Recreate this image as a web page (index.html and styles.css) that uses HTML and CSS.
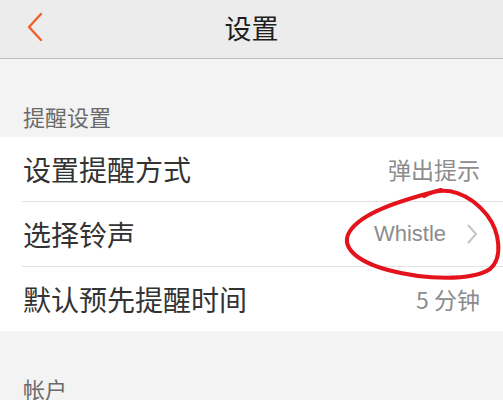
FILE: index.html
```html
<!DOCTYPE html>
<html lang="zh">
<head>
  <meta charset="UTF-8">
  <title>设置</title>
  <link rel="stylesheet" href="styles.css">
</head>
<body>
  <div class="topbar">
    <svg class="back" width="20" height="32" viewBox="0 0 20 32">
      <polyline points="15,3 3,16 15,29" fill="none" stroke="#ef6128" stroke-width="2.4" stroke-linecap="round" stroke-linejoin="round"/>
    </svg>
    <div class="title">设置</div>
  </div>

  <div class="section-title">提醒设置</div>
  <div class="group">
    <div class="row">
      <span class="label">设置提醒方式</span>
      <span class="value">弹出提示</span>
    </div>
    <div class="row">
      <span class="label">选择铃声</span>
      <span class="value latin">Whistle
        <svg class="arrow" width="12" height="20" viewBox="0 0 12 20">
          <polyline points="2,1 10,10 2,19" fill="none" stroke="#c4c4c4" stroke-width="2"/>
        </svg>
      </span>
    </div>
    <div class="row">
      <span class="label">默认预先提醒时间</span>
      <span class="value">5 分钟</span>
    </div>
  </div>

  <div class="section-title">帐户</div>

  <!-- hand-drawn red mark over the ringtone row -->
  <svg class="scribble" width="503" height="400" viewBox="0 0 503 400">
    <path d="M 424 196 C 446 184, 470 194, 487 215 C 500 232, 503 258, 490 269 C 472 281, 425 280, 388 270 C 355 261, 340 246, 350 231 C 362 213, 398 201, 441 190"
          fill="none" stroke="#e3121b" stroke-width="4" stroke-linecap="round"/>
  </svg>
</body>
</html>
```

FILE: styles.css
```css
body {
  margin: 0;
  background: #f3f3f3;
  font-family: "Noto Sans CJK SC", "Liberation Sans", sans-serif;
  position: relative;
  overflow: hidden;
}
.topbar {
  height: 58px;
  background: #ececec;
  border-bottom: 1px solid #bdbdbd;
  display: flex;
  align-items: center;
  justify-content: center;
  position: relative;
}
.back {
  position: absolute;
  left: 26px;
  top: 11px;
}
.title {
  font-size: 27px;
  color: #1e1e1e;
  line-height: 32px;
  margin-top: -2px;
}
.section-title {
  height: 78px;
  box-sizing: border-box;
  display: flex;
  align-items: flex-end;
  padding: 0 0 6px 23px;
  font-size: 22px;
  line-height: 30px;
  color: #6a6a6a;
}
.group {
  background: #fff;
  padding-left: 22px;
}
.row {
  height: 64px;
  display: flex;
  align-items: center;
  justify-content: space-between;
  padding-right: 23px;
  border-bottom: 1px solid #e3e3e3;
}
.row:last-child {
  border-bottom: none;
}
.label {
  font-size: 28px;
  color: #333;
  margin-left: 1px;
}
.value {
  font-size: 23px;
  color: #8c8c8c;
  display: flex;
  align-items: center;
}
.latin {
  font-family: "Liberation Sans", sans-serif;
  font-size: 22px;
  margin-right: 2px;
}
.arrow {
  margin-left: 20px;
}
.scribble {
  position: absolute;
  left: 0;
  top: 0;
  pointer-events: none;
}
```
